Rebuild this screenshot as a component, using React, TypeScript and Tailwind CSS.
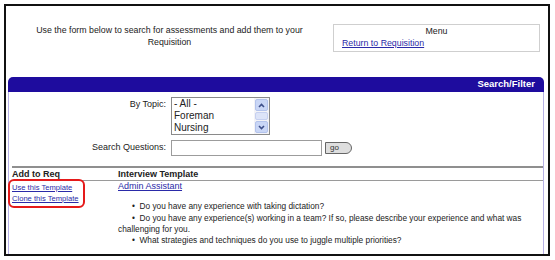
const font = { fontFamily: '"Liberation Sans", Arial, sans-serif' }

function Chevron({ up }: { up?: boolean }) {
  return (
    <svg width="7" height="5" viewBox="0 0 7 5">
      <path d={up ? 'M1 4 L3.5 1.5 L6 4' : 'M1 1 L3.5 3.5 L6 1'} fill="none" stroke="#3d4f8a" strokeWidth="1.6" />
    </svg>
  )
}

function TopicList() {
  return (
    <div className="flex w-[99px] h-[38px] border border-[#8a8a8a] bg-white">
      <div className="flex-1 pl-[2px] text-[10px] leading-[12px] text-[#222]">
        <div>- All -</div>
        <div>Foreman</div>
        <div>Nursing</div>
      </div>
      <div className="w-[15px] flex flex-col bg-[#f3f3f7] p-[1px] gap-[1px]">
        <div className="h-[12px] rounded-[2px] bg-[#c9d6f6] border border-[#b3c3ec] flex items-center justify-center">
          <Chevron up />
        </div>
        <div className="flex-1 rounded-[2px] bg-[#dde4f8] border border-[#c6d0f0]" />
        <div className="h-[12px] rounded-[2px] bg-[#c9d6f6] border border-[#b3c3ec] flex items-center justify-center">
          <Chevron />
        </div>
      </div>
    </div>
  )
}

export default function App() {
  return (
    <div className="w-[555px] h-[260px] bg-white pl-[4px] pr-[5px] pt-[4px] pb-[4px]" style={font}>
      <div className="h-full border-2 border-[#111] flex flex-col">
        <div className="h-[71px] flex items-start pt-[18px] shrink-0">
          <div className="w-[327px] text-center text-[8.8px] leading-[12px] text-[#222]">
            Use the form below to search for assessments and add them to your
            <br />
            Requisition
          </div>
          <div className="w-[207px] h-[28px] border border-[#cfcfcf] px-[8px] text-[8.8px] leading-[12px]">
            <div className="text-center text-[#222]">Menu</div>
            <a className="text-[#2a2aa8] underline">Return to Requisition</a>
          </div>
        </div>

        <div className="ml-[2px] w-[536px] flex-1 flex flex-col">
          <div className="h-[15px] rounded-t-[5px] bg-[#1e0c9e] flex items-center justify-end pr-[9px] text-white font-bold text-[9.5px]">
            Search/Filter
          </div>
          <div className="flex-1 border-x border-[#b7b1e6] pt-[5px]">
            <div className="flex items-start gap-[5px]">
              <div className="w-[157px] text-right text-[9px] leading-[12px] pt-[1px] text-[#222]">By Topic:</div>
              <TopicList />
            </div>
            <div className="flex items-center mt-[5px]">
              <div className="w-[157px] text-right text-[9px] text-[#222]">Search Questions:</div>
              <div className="ml-[5px] w-[151px] h-[16px] border border-[#9c9c9c] bg-white" />
              <div className="ml-[3px] w-[27px] h-[12px] rounded-r-full rounded-l-[3px] border border-[#666] bg-[#dedede] text-[8px] leading-[10px] pl-[4px] text-[#333]">
                go
              </div>
            </div>

            <div className="ml-[3px] mr-0 mt-[10px]">
              <div className="h-[2px] bg-[#8f8f8f]" />
              <div className="flex text-[9px] leading-[10px] font-bold text-[#222] py-[1px]">
                <div className="w-[106px]">Add to Req</div>
                <div>Interview Template</div>
              </div>
              <div className="h-[1px] bg-[#9a9a9a]" />
              <div className="flex">
                <div className="w-[106px] relative text-[7.6px] leading-[11px] pt-[1px]">
                  <a className="block text-[#2a2aa8] underline">Use this Template</a>
                  <a className="block text-[#2a2aa8] underline">Clone this Template</a>
                  <div className="absolute left-[-4px] top-[-2px] w-[77px] h-[29px] border-[2.5px] border-[#e51a1a] rounded-[6px]" />
                </div>
                <div className="flex-1 text-[8.3px] leading-[11.3px] text-[#222]">
                  <a className="block text-[9px] text-[#2a2aa8] underline">Admin Assistant</a>
                  <div className="h-[9px]" />
                  <div className="indent-[14px]">•&nbsp;&nbsp;Do you have any experience with taking dictation?</div>
                  <div className="indent-[14px]">
                    •&nbsp;&nbsp;Do you have any experience(s) working in a team? If so, please describe your experience and what was
                    challenging for you.
                  </div>
                  <div className="indent-[14px]">•&nbsp;&nbsp;What strategies and techniques do you use to juggle multiple priorities?</div>
                </div>
              </div>
            </div>
          </div>
        </div>
      </div>
    </div>
  )
}
